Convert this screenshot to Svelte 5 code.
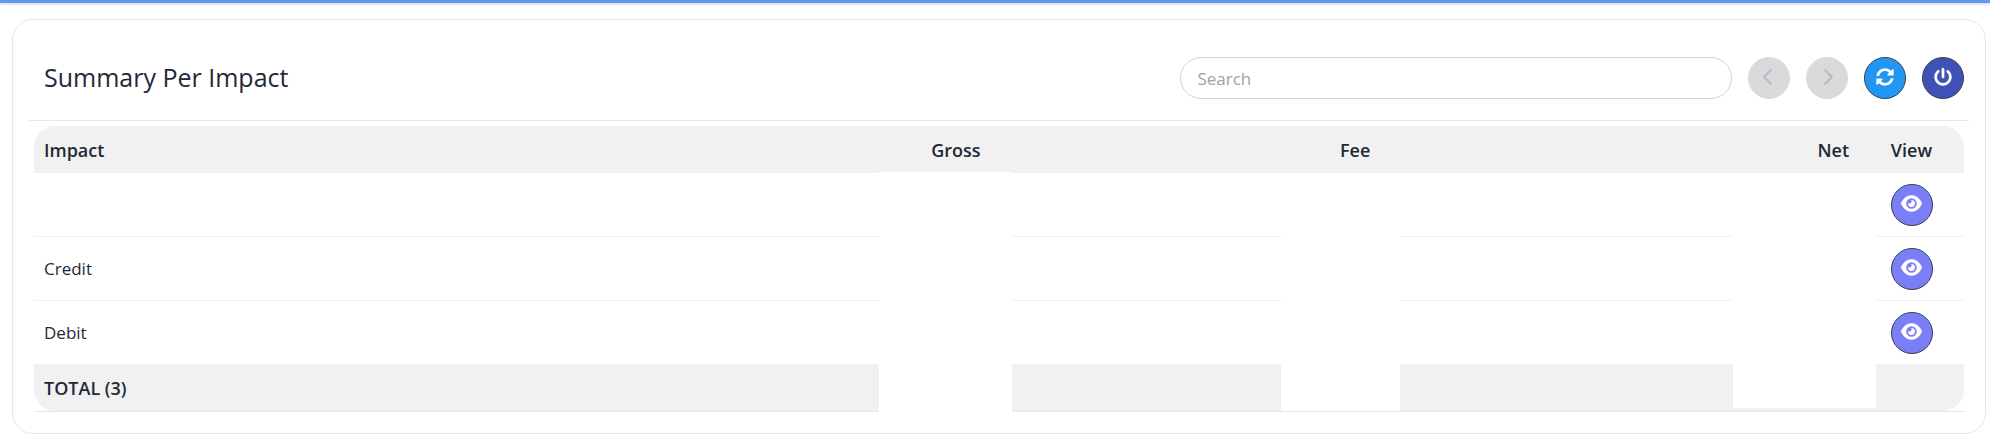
<script>
  let { title = 'Summary Per Impact' } = $props();

  let search = $state('');

  const rows = [
    { id: 1, impact: '' },
    { id: 2, impact: 'Credit' },
    { id: 3, impact: 'Debit' },
  ];
</script>

<div class="topbar"></div>

<main class="card">
  <header class="card-head">
    <h2>{title}</h2>
    <div class="toolbar">
      <input
        type="search"
        class="search"
        placeholder="Search"
        aria-label="Search"
        bind:value={search}
      />
      <button type="button" class="btn" disabled aria-label="Previous page">
        <svg viewBox="0 0 18 18" class="icon line"><path d="M11 2 4 9l7 7" /></svg>
      </button>
      <button type="button" class="btn" disabled aria-label="Next page">
        <svg viewBox="0 0 18 18" class="icon line"><path d="m7 2 7 7-7 7" /></svg>
      </button>
      <button type="button" class="btn btn-refresh" aria-label="Refresh">
        <svg viewBox="0 0 512 512" class="icon">
          <path d="M370.72 133.28C339.458 104.008 298.888 87.962 255.848 88c-77.458.068-144.328 53.178-162.791 126.85-1.344 5.363-6.122 9.15-11.651 9.15H24.103c-7.498 0-13.194-6.807-11.807-14.176C33.933 94.924 134.813 8 256 8c66.448 0 126.791 26.136 171.315 68.685L463.03 40.97C478.149 25.851 504 36.559 504 57.941V192c0 13.255-10.745 24-24 24H345.941c-21.382 0-32.09-25.851-16.971-40.971l41.75-41.749zM32 296h134.059c21.382 0 32.09 25.851 16.971 40.971l-41.75 41.75c31.262 29.273 71.835 45.319 114.876 45.28 77.418-.07 144.315-53.144 162.787-126.849 1.344-5.363 6.122-9.15 11.651-9.15h57.304c7.498 0 13.194 6.807 11.807 14.176C478.067 417.076 377.187 504 256 504c-66.448 0-126.791-26.136-171.315-68.685L48.97 471.03C33.851 486.149 8 475.441 8 454.059V320c0-13.255 10.745-24 24-24z" />
        </svg>
      </button>
      <button type="button" class="btn btn-power" aria-label="Close">
        <svg viewBox="0 0 512 512" class="icon power">
          <path d="M288 32c0-17.700-14.300-32-32-32s-32 14.300-32 32V256c0 17.700 14.300 32 32 32s32-14.300 32-32V32zM143.500 120.600c13.600-11.300 15.400-31.500 4.100-45.100s-31.500-15.400-45.100-4.100C49.700 115.400 16 181.800 16 256c0 132.500 107.500 240 240 240s240-107.500 240-240c0-74.200-33.800-140.600-86.600-184.600c-13.600-11.300-33.800-9.400-45.100 4.100s-9.400 33.800 4.100 45.100c38.900 32.300 63.500 81 63.500 135.400c0 97.200-78.800 176-176 176s-176-78.800-176-176c0-54.400 24.700-103.100 63.500-135.400z" />
        </svg>
      </button>
    </div>
  </header>

  <table>
    <thead>
      <tr>
        <th scope="col">Impact</th>
        <th scope="col" class="num col-gross">Gross<span class="cover"></span></th>
        <th scope="col" class="num col-fee">Fee<span class="cover"></span></th>
        <th scope="col" class="num col-net">Net<span class="cover"></span></th>
        <th scope="col" class="col-view">View</th>
      </tr>
    </thead>
    <tbody>
      {#each rows as row (row.id)}
        <tr>
          <td>{row.impact}</td>
          <td></td>
          <td></td>
          <td></td>
          <td class="view">
            <button type="button" class="btn btn-view" aria-label="View {row.impact}">
              <svg viewBox="0 0 576 512" class="icon eye">
                <path d="M288 32c-80.800 0-145.500 36.800-192.600 80.600C48.600 156 17.300 208 2.500 243.700c-3.300 7.900-3.300 16.700 0 24.600C17.300 304 48.600 356 95.400 399.400C142.500 443.200 207.200 480 288 480s145.500-36.800 192.600-80.600c46.800-43.500 78.100-95.400 93-131.100c3.300-7.900 3.300-16.700 0-24.600c-14.900-35.700-46.200-87.700-93-131.100C433.500 68.800 368.800 32 288 32zM144 256a144 144 0 1 1 288 0 144 144 0 1 1 -288 0zm144-64c0 35.300-28.700 64-64 64c-7.100 0-13.900-1.200-20.300-3.300c-5.500-1.800-11.900 1.600-11.700 7.400c.3 6.900 1.300 13.800 3.200 20.700c13.700 51.200 66.400 81.600 117.600 67.900s81.600-66.400 67.900-117.600c-11.100-41.500-47.800-69.400-88.600-71.100c-5.800-.2-9.200 6.100-7.400 11.700c2.100 6.400 3.300 13.200 3.300 20.300z" />
              </svg>
            </button>
          </td>
        </tr>
      {/each}
    </tbody>
    <tfoot>
      <tr>
        <th scope="row">TOTAL ({rows.length})</th>
        <td></td>
        <td></td>
        <td></td>
        <td></td>
      </tr>
    </tfoot>
  </table>
</main>

<style>
  :global(body) {
    background: #fff;
    color: #1f2937;
    font-family: 'Segoe UI', 'Open Sans', 'Noto Sans', sans-serif;
    font-size: 17px;
    line-height: 26px;
  }

  .topbar {
    height: 3px;
    background: #6199f9;
    box-shadow: 0 1px 3px rgba(0, 0, 0, 0.2);
  }

  .card {
    margin: 16px 4px 10px 12px;
    padding: 0 16px 21px;
    border: 1px solid #e5e7eb;
    border-radius: 21px;
  }

  .card-head {
    display: flex;
    align-items: center;
    justify-content: space-between;
    padding: 37px 5px 21px;
    border-bottom: 1px solid #e5e7eb;
  }
  .card-head h2 {
    margin: 0;
    padding: 0 10px 2px;
    font-size: 25px;
    font-weight: 500;
    line-height: 36px;
  }

  .toolbar {
    display: flex;
    gap: 16px;
    width: 40.6%;
  }
  .search {
    flex: 1;
    min-width: 0;
    height: 42px;
    box-sizing: border-box;
    padding: 0 16px;
    border: 1px solid #d1d5db;
    border-radius: 21px;
    background: #fff;
    color: inherit;
    font: inherit;
    appearance: none;
  }
  .search::placeholder { color: #9ca3af; opacity: 1; }

  .btn {
    display: inline-flex;
    align-items: center;
    justify-content: center;
    flex: none;
    width: 42px;
    height: 42px;
    padding: 0 0 2px;
    border: 1px solid #374151;
    border-radius: 50%;
    color: #fff;
    cursor: pointer;
  }
  .btn:disabled {
    border-color: #d9dadc;
    background: #d9dadc;
    color: #b7babf;
    cursor: default;
  }
  .btn-refresh { background: #2196f3; }
  .btn-power { background: #3f51b5; }
  .btn-view { background: #7b7ff6; }

  .icon { width: 18px; height: 18px; fill: currentColor; }
  .eye { width: 21px; height: 19px; }
  .power { stroke: currentColor; stroke-width: 14; overflow: visible; }
  .line {
    fill: none;
    stroke: currentColor;
    stroke-width: 2;
    stroke-linecap: round;
    stroke-linejoin: round;
  }

  table {
    width: calc(100% - 10px);
    margin: 5px 5px 0;
    border-collapse: separate;
    border-spacing: 0;
    border-bottom: 1px solid #e5e7eb;
    table-layout: fixed;
  }
  th, td {
    box-sizing: border-box;
    padding: 10px;
    text-align: left;
  }
  th { font-size: 18px; font-weight: 600; }
  thead th { height: 47px; }
  thead th, tfoot th, tfoot td { background: #f1f1f1; }
  tbody td { height: 64px; border-bottom: 1px solid #f1f1f1; }
  thead th:first-child { border-top-left-radius: 21px; }
  thead th:last-child { border-top-right-radius: 21px; }
  tfoot th:first-child { border-bottom-left-radius: 21px; }
  tfoot td:last-child { border-bottom-right-radius: 21px; }

  thead .num { position: relative; text-align: right; }
  .col-gross { width: 20%; }
  .col-fee { width: 20.2%; }
  .col-net { width: 24.8%; }
  thead .col-view { width: 105px; text-align: center; }
  tbody .view { text-align: center; line-height: 0; }

  /* Covers sit over the amounts of each numeric column. */
  .cover {
    position: absolute;
    z-index: 1;
    top: 47px;
    height: 238px;
    background: #fff;
  }
  .col-gross .cover { top: 46px; right: -21px; width: 133px; height: 240px; }
  .col-fee .cover { right: -20px; width: 119px; }
  .col-net .cover { right: -17px; width: 143px; height: 235px; }
</style>
